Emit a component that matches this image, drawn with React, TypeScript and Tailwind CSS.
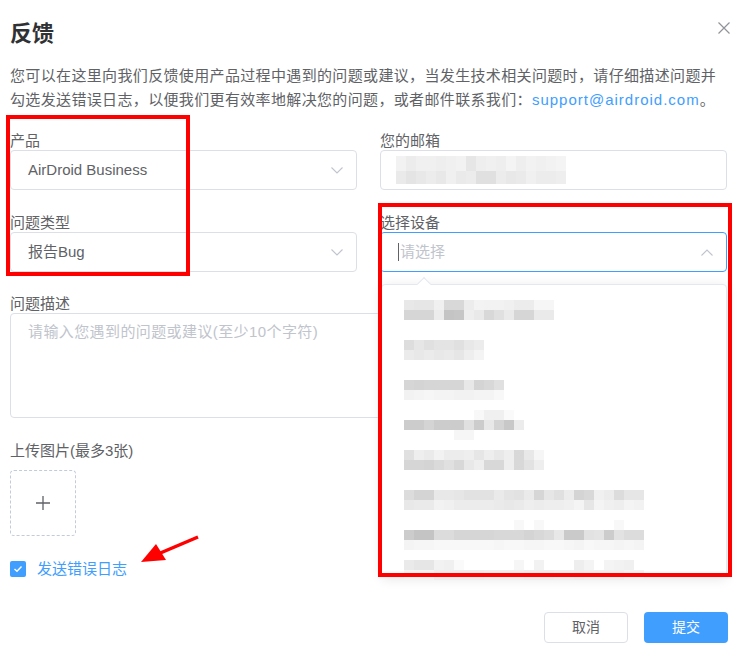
import React from "react";

const FONT = "font-['Liberation_Sans','Noto_Sans_CJK_SC',sans-serif]";

function Mosaic({ rows, w = 10, hs }: { rows: string[]; w?: number; hs?: number[] }) {
  return (
    <div className="flex flex-col">
      {rows.map((r, i) => (
        <div key={i} className="flex">
          {r.split(" ").map((c, j) => (
            <div
              key={j}
              style={{
                width: w,
                height: hs ? hs[i] : 10,
                backgroundColor: c === "--" ? "transparent" : `#${c}${c}${c}`,
              }}
            />
          ))}
        </div>
      ))}
    </div>
  );
}

function ChevronDown() {
  return (
    <svg width="12" height="7" viewBox="0 0 12 7" fill="none">
      <path d="M0.5 0.5 L6 6 L11.5 0.5" stroke="#c0c4cc" strokeWidth="1.1" />
    </svg>
  );
}
function ChevronUp() {
  return (
    <svg width="12" height="7" viewBox="0 0 12 7" fill="none">
      <path d="M0.5 6.5 L6 1 L11.5 6.5" stroke="#c0c4cc" strokeWidth="1.1" />
    </svg>
  );
}

const items: { cls: string; rows: string[] }[] = [
  {
    cls: "mt-[15px]",
    rows: [
      "e8 e6 e6 f0 d8 d8 ec f3 f2 f2 f0 ec ec f6 f6",
      "d6 d6 d6 ec c4 c6 ee e9 d8 e0 ea d6 d6 ea ea",
    ],
  },
  { cls: "mt-[20px]", rows: ["dd e6 e0 e4 e4 e0 e8 ec", "eb e8 eb e8 ea e6 ee f4"] },
  { cls: "mt-[20px]", rows: ["d6 d4 d6 d6 d6 d6 e8 d4 d8 e0", "f2 f4 f6 f4 f4 f2 f2 f4 f4 f8"] },
  {
    cls: "mt-[10px]",
    rows: [
      "-- -- -- -- -- -- -- f8 f0 f0 fa --",
      "cc cc d4 cc cc cc e0 cc e8 d4 c8 ec",
      "-- -- -- -- -- f6 f6 -- -- -- -- --",
    ],
  },
  {
    cls: "mt-[10px]",
    rows: ["e0 ee ea f2 ec ec ee e6 ee e8 ee d8 e8 f6", "d6 d6 d4 da e0 d8 e8 ee d8 d8 ee d8 e2 ee"],
  },
  {
    cls: "mt-[20px]",
    rows: [
      "dc d4 d4 e8 e8 e6 e2 e2 e2 ea e4 e2 ea d6 e6 e0 ec d4 d8 f0 ec dc e6 e6",
      "e8 ea ea f2 f0 ec ec ec ec ea e8 ea ee ec ee ee f0 f4 e6 f4 f0 ee f4 f2",
    ],
  },
  {
    cls: "mt-[10px]",
    rows: [
      "-- -- -- -- -- -- -- -- -- -- -- f8 -- f8 -- -- -- -- -- -- -- f8 -- --",
      "cc c4 c4 dc dc d6 d6 d6 d6 d8 d8 d8 d4 d8 dc e8 ca ca e2 e4 cc e2 dc dc",
      "f4 f6 f6 f8 f8 f8 f8 f8 f8 f6 f8 f8 f6 f6 f8 f8 f6 f4 f8 f6 f6 f4 f6 f4",
    ],
  },
  {
    cls: "mt-[10px]",
    rows: [
      "ea e6 e6 f2 f0 fa -- -- -- -- -- f6 -- f2 -- -- -- ee f4 -- f4 f2 f0 --",
      "f4 f4 f4 ee ee ee ee ee f0 f0 f0 f0 ee ee ee f0 f0 ee f0 f0 f0 f0 f4 f4",
    ],
  },
];

export default function App() {
  return (
    <div className={`relative w-[753px] h-[651px] bg-white overflow-hidden ${FONT}`}>
      <div className="pl-[10px] pr-[26px] pt-[19px]">
        {/* header */}
        <div className="flex justify-between items-start">
          <div className="text-[22px] font-bold leading-[30px] text-[#303133]">反馈</div>
          <svg width="12" height="12" viewBox="0 0 12 12" className="mt-[3px] mr-[-3px]">
            <path d="M0.5 0.5 L11.5 11.5 M11.5 0.5 L0.5 11.5" stroke="#909399" strokeWidth="1.2" />
          </svg>
        </div>
        {/* desc */}
        <p className="mt-[15px] w-[727px] text-[15px] leading-[24px] tracking-[0.35px] text-[#606266] [text-spacing-trim:space-all] whitespace-nowrap">
          您可以在这里向我们反馈使用产品过程中遇到的问题或建议，当发生技术相关问题时，请仔细描述问题并
          <br />
          勾选发送错误日志，以便我们更有效率地解决您的问题，或者邮件联系我们：
          <span className="text-[#409eff] tracking-[1px]">support@airdroid.com</span>。
        </p>

        {/* grid */}
        <div className="mt-[20px] grid grid-cols-2 gap-x-[23px]">
          <div>
            <div className="text-[15px] leading-[18px] text-[#606266]">产品</div>
            <div className="h-[40px] border border-[#dcdfe6] rounded-[4px] flex items-center justify-between pl-[17px] pr-[13px]">
              <span className="text-[15px] text-[#606266]">AirDroid Business</span>
              <ChevronDown />
            </div>
          </div>
          <div>
            <div className="text-[15px] leading-[18px] text-[#606266]">您的邮箱</div>
            <div className="h-[40px] border border-[#dcdfe6] rounded-[4px] flex items-center pl-[15px]">
              <Mosaic
                rows={[
                  "f2 ec f0 f0 ee f0 f2 e6 ee f0 ee f4 ee f2 f0 f2 f4",
                  "ea e4 e8 ec e8 f0 ea ec e0 e0 ec e8 ea f0 ec ec ee",
                ]}
                hs={[15, 13]}
              />
            </div>
          </div>
          <div className="mt-[24px]">
            <div className="text-[15px] leading-[18px] text-[#606266]">问题类型</div>
            <div className="h-[40px] border border-[#dcdfe6] rounded-[4px] flex items-center justify-between pl-[17px] pr-[13px]">
              <span className="text-[15px] text-[#606266]">报告Bug</span>
              <ChevronDown />
            </div>
          </div>
          <div className="mt-[24px]">
            <div className="text-[15px] leading-[18px] text-[#606266]">选择设备</div>
            <div className="h-[40px] border border-[#409eff] rounded-[4px] flex items-center justify-between pl-[17px] pr-[13px]">
              <span className="flex items-center text-[15px] text-[#c0c4cc]">
                <span className="w-[1px] h-[18px] bg-[#606266] mr-[1px]" />
                请选择
              </span>
              <ChevronUp />
            </div>
          </div>
        </div>

        {/* textarea */}
        <div className="mt-[23px] text-[15px] leading-[18px] text-[#606266]">问题描述</div>
        <div className="h-[105px] border border-[#dcdfe6] rounded-[4px] pl-[17px] pt-[6px]">
          <span className="text-[15px] leading-[24px] text-[#c0c4cc] tracking-[0.4px]">请输入您遇到的问题或建议(至少10个字符)</span>
        </div>

        <div className="mt-[24px] text-[15px] leading-[18px] text-[#606266]">上传图片(最多3张)</div>
        <div className="mt-[10px] w-[66px] h-[66px] border border-dashed border-[#c0ccda] rounded-[4px] flex items-center justify-center">
          <svg width="14" height="14" viewBox="0 0 14 14">
            <path d="M7 0 V14 M0 7 H14" stroke="#606266" strokeWidth="1.3" />
          </svg>
        </div>

        <div className="mt-[25px] flex items-center">
          <div className="w-[16px] h-[16px] rounded-[2px] bg-[#409eff] flex items-center justify-center">
            <svg width="10" height="8" viewBox="0 0 10 8">
              <path d="M1.5 4 L4 6.3 L8.5 1.5" stroke="white" strokeWidth="1.4" fill="none" />
            </svg>
          </div>
          <span className="ml-[11px] text-[15px] leading-[16px] text-[#409eff]">发送错误日志</span>
        </div>

        <div className="mt-[35px] mr-[-1px] flex justify-end gap-[16px]">
          <button className="w-[84px] h-[31px] border border-[#dcdfe6] rounded-[4px] bg-white text-[14px] text-[#606266]">
            取消
          </button>
          <button className="w-[84px] h-[31px] rounded-[4px] bg-[#409eff] text-[14px] text-white">提交</button>
        </div>
      </div>

      {/* dropdown popover */}
      <div className="absolute left-[381px] top-[284px] w-[346px] h-[293px] bg-white border border-[#e4e7ed] rounded-[4px] shadow-[0_2px_12px_rgba(0,0,0,0.1)]">
        <div className="absolute left-[37px] top-[-6px] w-[10px] h-[10px] bg-white border-l border-t border-[#e4e7ed] rotate-45" />
        <div className="flex flex-col pl-[22px]">
          {items.map((it, i) => (
            <div key={i} className={it.cls}>
              <Mosaic rows={it.rows} />
            </div>
          ))}
        </div>
      </div>

      {/* annotations */}
      <div className="absolute left-[6px] top-[115px] w-[184px] h-[161px] border-4 border-[#ff0000]" />
      <div className="absolute left-[378px] top-[203px] w-[354px] h-[374px] border-4 border-[#ff0000]" />
      <svg className="absolute left-0 top-0" width="753" height="651">
        <path d="M198 537 L158 554" stroke="#ff0000" strokeWidth="3.5" />
        <polygon points="141,562 156,544 166,560" fill="#ff0000" />
      </svg>
    </div>
  );
}
